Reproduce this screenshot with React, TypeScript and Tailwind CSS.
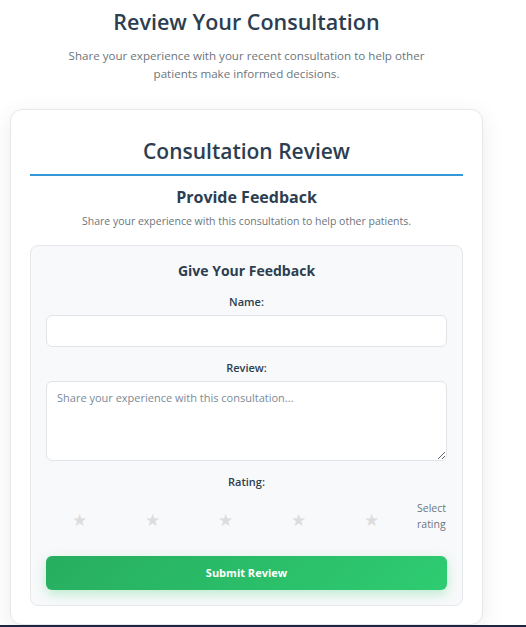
import { useState } from "react";

const font = { fontFamily: '"Open Sans", "Noto Sans", sans-serif' };

function Label({ children }: { children: string }) {
  return (
    <label className="block text-center text-[11px] leading-4 font-semibold text-[#2c3e50] mb-[5px]">
      {children}
    </label>
  );
}

export default function App() {
  const [rating, setRating] = useState(0);

  return (
    <div className="min-h-screen bg-white" style={font}>
      <div className="w-[493px] px-[10px] pt-[6px]">
        <div className="text-center">
          <h1 className="text-[21.5px] leading-[32px] font-semibold text-[#2c3e50]">
            Review Your Consultation
          </h1>
          <p className="mx-auto mt-[9px] w-[380px] text-[11.6px] leading-[18px] text-[#6c757d]">
            Share your experience with your recent consultation to help other
            patients make informed decisions.
          </p>
        </div>

        <div className="mt-[26px] rounded-xl border border-[#e5e7eb] bg-white px-[19px] pt-[26px] pb-[18px] shadow-[0_6px_24px_rgba(0,0,0,0.08)]">
          <h2 className="border-b-2 border-[#3498db] pb-2 text-center text-[21px] leading-[30px] font-semibold text-[#2c3e50]">
            Consultation Review
          </h2>

          <h3 className="mt-[9px] text-center text-[16px] leading-6 font-bold text-[#2c3e50]">
            Provide Feedback
          </h3>
          <p className="mt-1 text-center text-[10.5px] leading-4 text-[#6c757d]">
            Share your experience with this consultation to help other patients.
          </p>

          <div className="mt-4 rounded-lg border border-[#e5e7eb] bg-[#f8f9fa] px-[15px] pt-[15px] pb-[15px]">
            <h4 className="text-center text-[14px] leading-5 font-bold text-[#2c3e50]">
              Give Your Feedback
            </h4>

            <div className="mt-[13px]">
              <Label>Name:</Label>
              <input
                type="text"
                className="block h-8 w-full rounded-md border border-[#e1e5e9] bg-white px-[10px] text-[11px] outline-none"
              />
            </div>

            <div className="mt-[13px]">
              <Label>Review:</Label>
              <textarea
                placeholder="Share your experience with this consultation..."
                className="block h-20 w-full rounded-md border border-[#e1e5e9] bg-white px-[10px] py-[8px] text-[11px] leading-4 text-[#2c3e50] placeholder-[#7b8a97] outline-none"
              />
            </div>

            <div className="mt-[13px]">
              <Label>Rating:</Label>
              <div className="mt-[10px] flex items-center gap-[7px]">
                {[1, 2, 3, 4, 5].map((n) => (
                  <button
                    key={n}
                    type="button"
                    onClick={() => setRating(n)}
                    className={
                      "mt-2 w-[66px] text-center text-[17px] leading-5 " +
                      (n <= rating ? "text-[#f1c40f]" : "text-[#dddddd]")
                    }
                  >
                    ★
                  </button>
                ))}
                <span className="flex-1 pl-[6px] text-[10.5px] leading-4 text-[#6c757d]">
                  Select rating
                </span>
              </div>
            </div>

            <button
              type="button"
              className="mt-6 block h-[34px] w-full rounded-md bg-linear-135 from-[#27ae60] to-[#2ecc71] text-[11px] font-bold text-white shadow-[0_4px_12px_rgba(46,204,113,0.3)]"
            >
              Submit Review
            </button>
          </div>
        </div>
      </div>
      <div className="h-[40px] bg-[#1c2541]" />
    </div>
  );
}
